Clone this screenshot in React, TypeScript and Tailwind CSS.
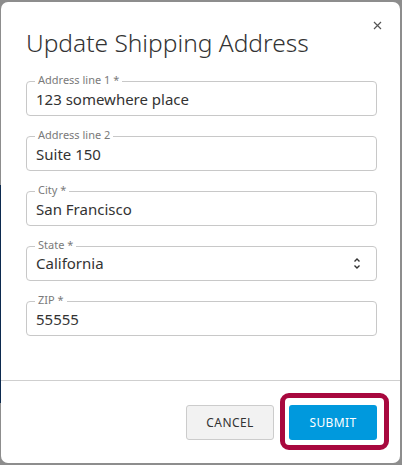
import React, { useState } from 'react';

const font = { fontFamily: '"Noto Sans", "Open Sans", sans-serif' };

type FieldProps = {
  label: string;
  value: string;
  select?: boolean;
};

const Field: React.FC<FieldProps> = ({ label, value, select }) => {
  const [val, setVal] = useState(value);
  return (
    <div className="relative h-[35px] rounded-[4px] border border-[#c8c8c8] bg-white">
      <span className="absolute -top-[8px] left-[8px] bg-white px-[3px] text-[11px] leading-none text-[#7a7a7a]">
        {label}
      </span>
      {select ? (
        <div className="flex h-full items-center justify-between pl-[9px] pr-[15px] text-[15px] text-[#333]">
          <span>{val}</span>
          <svg width="8" height="13" viewBox="0 0 8 13" fill="none" stroke="#333" strokeWidth="1.4">
            <path d="M1.5 4.5 L4 2 L6.5 4.5" />
            <path d="M1.5 8.5 L4 11 L6.5 8.5" />
          </svg>
        </div>
      ) : (
        <input
          value={val}
          onChange={(e) => setVal(e.target.value)}
          className="h-full w-full rounded-[4px] bg-transparent pl-[9px] text-[15px] text-[#333] outline-none"
          style={font}
        />
      )}
    </div>
  );
};

export default function App() {
  return (
    <div className="relative h-[465px] w-[402px] overflow-hidden bg-[#8d8d8d]" style={font}>
      {/* page behind the overlay */}
      <div className="mt-[185px] h-[218px] w-[3px] bg-[#0c2a4f]" />

      {/* dialog */}
      <div className="absolute left-[1px] top-[2px] flex h-[461px] w-[399px] flex-col rounded-[7px] bg-white">
        <button className="absolute right-[16px] top-[17px] p-[2px]" aria-label="Close">
          <svg width="9" height="9" viewBox="0 0 9 9" stroke="#555" strokeWidth="1.2">
            <path d="M1 1 L8 8 M8 1 L1 8" />
          </svg>
        </button>

        <div className="flex-1 pl-[25px] pr-[23px] pt-[23px]">
          <h1 className="text-[24.5px] font-light leading-[36px] text-[#333]">
            Update Shipping Address
          </h1>
          <div className="mt-[20px] flex flex-col gap-[20px]">
            <Field label="Address line 1 *" value="123 somewhere place" />
            <Field label="Address line 2" value="Suite 150" />
            <Field label="City *" value="San Francisco" />
            <Field label="State *" value="California" select />
            <Field label="ZIP *" value="55555" />
          </div>
        </div>

        <div className="flex justify-end gap-[15px] border-t border-[#cfcfcf] pb-[23px] pl-[25px] pr-[23px] pt-[24px]">
          <button className="h-[35px] w-[88px] rounded-[3px] border border-[#cccccc] bg-[#f2f2f2] text-[12px] tracking-[0.4px] text-[#333]">
            CANCEL
          </button>
          <div className="relative">
            <div className="pointer-events-none absolute -bottom-[10px] -left-[9px] -right-[12px] -top-[12px] rounded-[9px] border-[5px] border-[#a8083e]" />
            <button className="relative h-[35px] w-[88px] rounded-[3px] bg-[#0099dd] text-[12px] tracking-[0.4px] text-white">
              SUBMIT
            </button>
          </div>
        </div>
      </div>
    </div>
  );
}
